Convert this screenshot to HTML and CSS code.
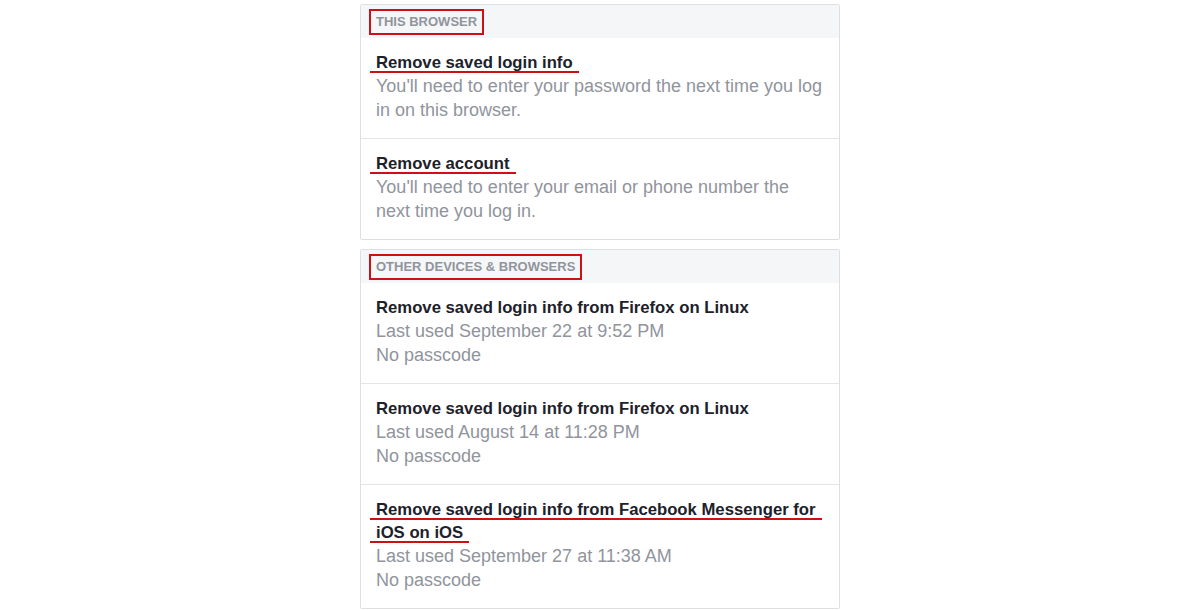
FILE: index.html
```html
<!DOCTYPE html>
<html>
<head>
<meta charset="utf-8">
<link rel="stylesheet" href="styles.css">
</head>
<body>
<main class="page">
  <section class="card">
    <header class="card-head"><span class="mark-box">This browser</span></header>
    <div class="item">
      <div class="title"><span class="mark-line">Remove saved login info</span></div>
      <div class="desc">You'll need to enter your password the next time you log in on this browser.</div>
    </div>
    <div class="item">
      <div class="title"><span class="mark-line">Remove account</span></div>
      <div class="desc">You'll need to enter your email or phone number the next time you log in.</div>
    </div>
  </section>
  <section class="card">
    <header class="card-head"><span class="mark-box">Other devices &amp; browsers</span></header>
    <div class="item">
      <div class="title plain">Remove saved login info from Firefox on Linux</div>
      <div class="desc">Last used September 22 at 9:52 PM</div>
      <div class="desc">No passcode</div>
    </div>
    <div class="item">
      <div class="title plain">Remove saved login info from Firefox on Linux</div>
      <div class="desc">Last used August 14 at 11:28 PM</div>
      <div class="desc">No passcode</div>
    </div>
    <div class="item">
      <div class="title"><span class="mark-line">Remove saved login info from Facebook Messenger for iOS on iOS</span></div>
      <div class="desc">Last used September 27 at 11:38 AM</div>
      <div class="desc">No passcode</div>
    </div>
  </section>
</main>
</body>
</html>
```

FILE: styles.css
```css
html, body {
  margin: 0;
  padding: 0;
  background: #ffffff;
}
body {
  font-family: "Liberation Sans", Arial, Helvetica, sans-serif;
}
.page {
  width: 480px;
  margin: 0 auto;
  padding-top: 4px;
  display: flex;
  flex-direction: column;
  gap: 9px;
}
.card {
  border: 1px solid #dddfe2;
  border-radius: 2px;
  background: #fff;
}
.card-head {
  background: #f5f6f7;
  height: 33px;
  display: flex;
  align-items: center;
  padding-left: 8px;
}
.mark-box {
  font-size: 13px;
  font-weight: bold;
  text-transform: uppercase;
  color: #90949c;
  line-height: 22px;
  padding: 0 5px 0 5px;
  border: 2px solid #cc1016;
}
.item {
  padding: 13px 15px 16px 15px;
  border-top: 1px solid #e5e5e5;
}
.card-head + .item {
  border-top: none;
}
.title {
  font-size: 16.7px;
  font-weight: bold;
  color: #1d2129;
  line-height: 23px;
  margin-left: -6px;
}
.title.plain {
  margin-left: 0;
}
.mark-line {
  padding: 0 6px 1px 6px;
  -webkit-box-decoration-break: clone;
  box-decoration-break: clone;
  background: linear-gradient(#cc1016, #cc1016) left bottom / 100% 2px no-repeat;
}
.desc {
  font-size: 18px;
  color: #90949c;
  line-height: 24px;
}
```
